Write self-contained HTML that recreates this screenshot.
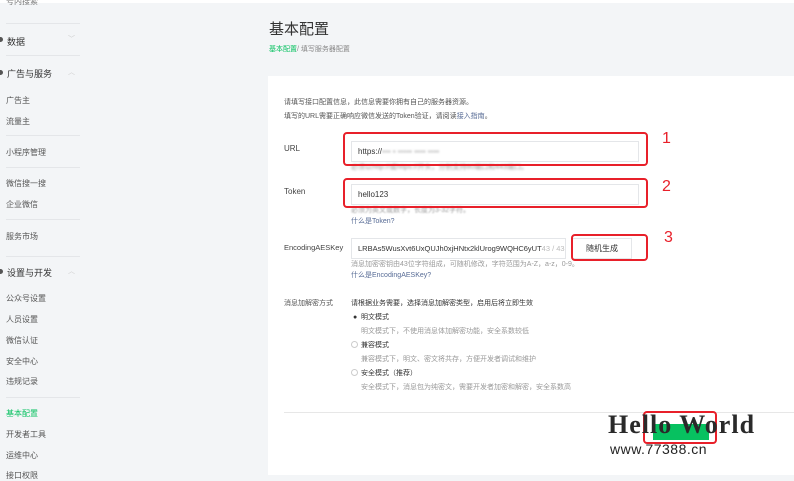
<!DOCTYPE html>
<html><head><meta charset="utf-8"><style>
*{margin:0;padding:0;box-sizing:border-box}
body{width:794px;height:480px;overflow:hidden;background:#f3f5f7;font-family:"Liberation Sans","Noto Sans CJK SC",sans-serif;position:relative;color:#353535}
.a{position:absolute;white-space:nowrap}
.s{font-size:8px;color:#555}
.h{font-size:9px;color:#333}
.d{position:absolute;left:6px;width:74px;height:1px;background:#e4e6e9}
.g{color:#999;font-size:7px}
.l{color:#576b95;font-size:7px}
.inp{position:absolute;background:#fff;border:1px solid #e4e6e9;font-size:8px;color:#333;padding-left:6px;line-height:19px}
.red{position:absolute;border:2px solid #e8202a;border-radius:4px}
.n{position:absolute;color:#e8202a;font-size:16px}
.rad{position:absolute;width:7px;height:7px;border:1px solid #ccc;border-radius:50%;background:#fff}
</style></head><body>
<div class="a" style="left:0;top:0;width:794px;height:3px;background:#fff"></div>
<div class="a s" style="left:6px;top:-4px;color:#777">号内搜索</div>
<div class="d" style="top:23px"></div>
<div class="a" style="left:-2px;top:37px;width:5px;height:5px;border-radius:50%;background:#555"></div>
<div class="a h" style="left:7px;top:35px">数据</div>
<div class="a" style="left:68px;top:34px;font-size:7px;color:#ccc">﹀</div>
<div class="d" style="top:55px"></div>
<div class="a" style="left:-2px;top:70px;width:5px;height:5px;border-radius:50%;background:#555"></div>
<div class="a h" style="left:7px;top:67px">广告与服务</div>
<div class="a" style="left:68px;top:67px;font-size:7px;color:#ccc">︿</div>
<div class="a s" style="left:6px;top:95px">广告主</div>
<div class="a s" style="left:6px;top:116px">流量主</div>
<div class="d" style="top:135px"></div>
<div class="a s" style="left:6px;top:147px">小程序管理</div>
<div class="d" style="top:167px"></div>
<div class="a s" style="left:6px;top:178px">微信搜一搜</div>
<div class="a s" style="left:6px;top:199px">企业微信</div>
<div class="d" style="top:219px"></div>
<div class="a s" style="left:6px;top:231px">服务市场</div>
<div class="d" style="top:256px"></div>
<div class="a" style="left:-2px;top:269px;width:5px;height:5px;border-radius:50%;background:#555"></div>
<div class="a h" style="left:7px;top:266px">设置与开发</div>
<div class="a" style="left:68px;top:266px;font-size:7px;color:#ccc">︿</div>
<div class="a s" style="left:6px;top:293px">公众号设置</div>
<div class="a s" style="left:6px;top:314px">人员设置</div>
<div class="a s" style="left:6px;top:335px">微信认证</div>
<div class="a s" style="left:6px;top:356px">安全中心</div>
<div class="a s" style="left:6px;top:376px">违规记录</div>
<div class="d" style="top:397px"></div>
<div class="a s" style="left:6px;top:408px;color:#07c160">基本配置</div>
<div class="a s" style="left:6px;top:429px">开发者工具</div>
<div class="a s" style="left:6px;top:450px">运维中心</div>
<div class="a s" style="left:6px;top:470px">接口权限</div>

<div class="a" style="left:269px;top:18px;font-size:15px;color:#333">基本配置</div>
<div class="a" style="left:269px;top:44px;font-size:7px;color:#888"><span style="color:#07c160">基本配置</span>/ 填写服务器配置</div>

<div class="a" style="left:268px;top:76px;width:526px;height:399px;background:#fff"></div>
<div class="a" style="left:284px;top:96px;font-size:7px;color:#555;line-height:14px">请填写接口配置信息，此信息需要你拥有自己的服务器资源。<br>填写的URL需要正确响应微信发送的Token验证，请阅读<span style="color:#576b95">接入指南</span>。</div>

<div class="a" style="left:284px;top:144px;font-size:8px;color:#444">URL</div>
<div class="inp" style="left:351px;top:141px;width:288px;height:21px">https://<span style="color:#bbb;filter:blur(1px)">▪▪▪ ▪ ▪▪▪▪▪ ▪▪▪▪ ▪▪▪▪</span></div>
<div class="a g" style="left:351px;top:162px;filter:blur(1px)">必须以http://或https://开头，分别支持80端口和443端口。</div>
<div class="red" style="left:343px;top:132px;width:305px;height:34px"></div>
<div class="n" style="left:662px;top:130px">1</div>

<div class="a" style="left:284px;top:187px;font-size:8px;color:#444">Token</div>
<div class="inp" style="left:351px;top:184px;width:288px;height:21px">hello123</div>
<div class="a g" style="left:351px;top:205px;filter:blur(.8px)">必须为英文或数字，长度为3-32字符。</div>
<div class="a l" style="left:351px;top:216px">什么是Token?</div>
<div class="red" style="left:343px;top:178px;width:305px;height:30px"></div>
<div class="n" style="left:662px;top:178px">2</div>

<div class="a" style="left:284px;top:243px;font-size:7.5px;color:#444">EncodingAESKey</div>
<div class="inp" style="left:351px;top:238px;width:215px;height:21px;font-size:7.5px;overflow:hidden">LRBAs5WusXvt6UxQUJh0xjHNtx2klUrog9WQHC6yUT<span style="color:#bbb">43 / 43</span></div>
<div class="inp" style="left:572px;top:238px;width:60px;height:21px;text-align:center;padding:0">随机生成</div>
<div class="red" style="left:571px;top:234px;width:77px;height:27px"></div>
<div class="n" style="left:664px;top:229px">3</div>
<div class="a g" style="left:351px;top:259px">消息加密密钥由43位字符组成，可随机修改，字符范围为A-Z，a-z，0-9。</div>
<div class="a l" style="left:351px;top:270px">什么是EncodingAESKey?</div>

<div class="a" style="left:284px;top:298px;font-size:7px;color:#555">消息加解密方式</div>
<div class="a" style="left:351px;top:298px;font-size:7px;color:#333">请根据业务需要，选择消息加解密类型，启用后将立即生效</div>
<div class="a" style="left:353px;top:314px;font-size:7px;color:#333">●</div>
<div class="a" style="left:361px;top:312px;font-size:7px;color:#333">明文模式</div>
<div class="a g" style="left:361px;top:326px">明文模式下，不使用消息体加解密功能，安全系数较低</div>
<div class="rad" style="left:351px;top:341px"></div>
<div class="a" style="left:361px;top:340px;font-size:7px;color:#333">兼容模式</div>
<div class="a g" style="left:361px;top:354px">兼容模式下，明文、密文将共存，方便开发者调试和维护</div>
<div class="rad" style="left:351px;top:369px"></div>
<div class="a" style="left:361px;top:368px;font-size:7px;color:#333">安全模式（推荐）</div>
<div class="a g" style="left:361px;top:382px">安全模式下，消息包为纯密文，需要开发者加密和解密，安全系数高</div>

<div class="a" style="left:284px;top:412px;width:510px;height:1px;background:#e7e7e7"></div>
<div class="a" style="left:653px;top:424px;width:56px;height:16px;background:#07c160"></div>
<div class="red" style="left:643px;top:411px;width:74px;height:33px"></div>
<div class="a" style="left:608px;top:410px;font-size:26px;font-weight:bold;color:#2a2a2a;letter-spacing:1px;font-family:'Liberation Serif',serif">Hello World</div>
<div class="a" style="left:610px;top:441px;font-size:14px;color:#222;letter-spacing:.5px">www.77388.cn</div>
</body></html>
